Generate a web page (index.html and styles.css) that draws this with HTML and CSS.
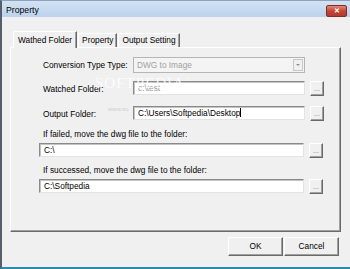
FILE: index.html
```html
<!DOCTYPE html>
<html lang="en">
<head>
  <meta charset="UTF-8" />
  <title>Property</title>
  <link rel="stylesheet" href="styles.css">
</head>
<body>
  <div class="window">
    <div class="titlebar">
      <span class="title">Property</span>
      <div class="close">&#x2715;</div>
    </div>

    <div class="tabs">
      <div class="tab active">Wathed Folder</div>
      <div class="tab">Property</div>
      <div class="tab">Output Setting</div>
    </div>

    <div class="panel">
      <div class="mark-url">www.so</div>

      <div class="row row-combo">
        <label class="label">Conversion Type Type:</label>
        <div class="combo">
          <span class="combo-text">DWG to Image</span>
          <span class="combo-arrow"></span>
        </div>
      </div>
      <div class="row row-watched">
        <label class="label">Watched Folder:</label>
        <div class="field grey">c:\test</div>
        <div class="dots">...</div>
      </div>
      <div class="row row-output">
        <label class="label">Output Folder:</label>
        <div class="field">C:\Users\Softpedia\Desktop<span class="caret"></span></div>
        <div class="dots">...</div>
      </div>
      <div class="note">If failed, move the dwg file to the folder:</div>
      <div class="row row-wide">
        <div class="field wide">C:\</div>
        <div class="dots">...</div>
      </div>
      <div class="note">If successed, move the dwg file to the folder:</div>
      <div class="row row-wide">
        <div class="field wide">C:\Softpedia</div>
        <div class="dots">...</div>
      </div>

      <div class="mark">SOFTPEDIA<sup>&reg;</sup></div>
    </div>

    <div class="buttons">
      <div class="btn">OK</div>
      <div class="btn">Cancel</div>
    </div>
  </div>
</body>
</html>
```

FILE: styles.css
```css
body, html {
  margin: 0;
  padding: 0;
  font-family: "Liberation Sans", Arial, sans-serif;
  font-size: 8.3px;
  color: #000;
  overflow: hidden;
}

.window {
  width: 350px;
  height: 269px;
  box-sizing: border-box;
  background: #f0f0f0;
  border-left: 2px solid #55606c;
  border-bottom: 2px solid #2d8ab5;
  border-top: 1px solid #8fa3b8;
  position: relative;
}

.titlebar {
  height: 16px;
  display: flex;
  align-items: center;
  justify-content: space-between;
  padding: 0 3px 0 4px;
  background: linear-gradient(#d3e2f3, #bcd3ec);
}
.title {
  font-size: 8.7px;
  margin-top: 1px;
}
.close {
  width: 19px;
  height: 10px;
  margin-top: 3px;
  border: 1px solid #7c3026;
  border-radius: 2px;
  background: linear-gradient(#e08a78, #c4453a 50%, #b23a2e);
  color: #fff;
  font-size: 7px;
  font-weight: bold;
  line-height: 10px;
  text-align: center;
}

/* tabs */
.tabs {
  display: flex;
  align-items: flex-end;
  height: 17px;
  margin: 13px 0 0 11px;
}
.tab {
  height: 13px;
  line-height: 13px;
  padding: 0 3px;
  border: 1px solid #fff;
  border-right-color: #696969;
  border-bottom: none;
  box-shadow: inset -1px 0 0 #a0a0a0;
  margin-right: 1px;
}
.tab.active {
  height: 16px;
  line-height: 16px;
  padding: 0 4px;
  margin-bottom: -1px;
  background: #f0f0f0;
  position: relative;
  z-index: 1;
}

.panel {
  position: relative;
  height: 185px;
  margin: 0 9px 0 8px;
  border: 1px solid #fff;
  border-right-color: #696969;
  border-bottom-color: #696969;
  box-shadow: inset -1px -1px 0 #a0a0a0;
  padding: 9px 0 0 32px;
  box-sizing: border-box;
}

.row {
  display: flex;
  align-items: flex-start;
  position: relative;
}
.label {
  width: 90px;
  line-height: 16px;
}
.row-combo { height: 16px; }
.row-watched { margin-top: 8px; }
.row-output { margin-top: 9px; }
.row-wide { margin-left: -4px; }

.combo {
  width: 172px;
  height: 16px;
  box-sizing: border-box;
  border: 1px solid #b5b5b5;
  background: #f4f4f4;
  display: flex;
  align-items: center;
  justify-content: space-between;
  padding-left: 3px;
}
.combo-text { color: #a0a0a0; }
.combo-arrow {
  width: 10px;
  height: 12px;
  margin-right: 1px;
  box-sizing: border-box;
  border: 1px solid #c8c8c8;
  background: #f0f0f0;
  position: relative;
}
.combo-arrow::after {
  content: "";
  position: absolute;
  left: 2px;
  top: 4px;
  border-left: 2px solid transparent;
  border-right: 2px solid transparent;
  border-top: 2px solid #909090;
}

.field {
  width: 172px;
  height: 14px;
  box-sizing: border-box;
  border: 1px solid;
  border-color: #8a8a8a #e3e3e3 #e3e3e3 #8a8a8a;
  box-shadow: inset 1px 1px 0 #c4c4c4;
  background: #fff;
  line-height: 12px;
  padding-left: 4px;
  white-space: nowrap;
}
.field.grey { color: #9a9a9a; }
.field.wide { width: 265px; }
.caret {
  display: inline-block;
  width: 1px;
  height: 9px;
  background: #000;
  vertical-align: -1px;
}

.dots {
  width: 14px;
  height: 15px;
  margin-left: 5px;
  box-sizing: border-box;
  border: 1px solid #fff;
  border-right-color: #696969;
  border-bottom-color: #696969;
  box-shadow: inset -1px -1px 0 #a0a0a0;
  color: #7a7a7a;
  font-size: 7px;
  line-height: 14px;
  text-align: center;
}

.note {
  margin: 7px 0 4px 0;
  line-height: 10px;
}

/* screenshot watermark */
.mark {
  position: absolute;
  left: 84px;
  top: 27px;
  font-family: "Liberation Serif", serif;
  font-size: 15px;
  letter-spacing: 1px;
  color: rgba(255, 255, 255, 0.85);
}
.mark sup { font-size: 6px; }
.mark-url {
  position: absolute;
  left: 97px;
  top: 58px;
  font-size: 6px;
  color: rgba(180, 180, 180, 0.6);
}

.buttons {
  display: flex;
  justify-content: flex-end;
  gap: 1px;
  margin: 5px 11px 0 0;
}
.btn {
  width: 55px;
  height: 19px;
  box-sizing: border-box;
  border: 1px solid #fff;
  border-right-color: #696969;
  border-bottom-color: #696969;
  box-shadow: inset -1px -1px 0 #a0a0a0;
  line-height: 17px;
  text-align: center;
}
```
